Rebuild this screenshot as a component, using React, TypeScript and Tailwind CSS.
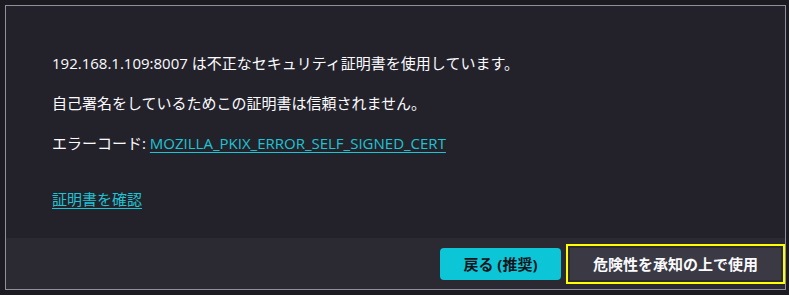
import React from "react";

export default function App() {
  const font = { fontFamily: '"Open Sans", "Noto Sans CJK JP", sans-serif' };
  return (
    <div className="w-[789px] h-[295px] bg-[#1c1b22] pt-[5px] pl-[5px]" style={font}>
      <div className="w-[781px] h-[285px] border border-[#8f8f9d] bg-[#23222b] flex flex-col">
        <div className="flex-1 pl-[46px] pt-[47px] text-[15px] leading-[20px] text-[#fbfbfe]">
          <p>192.168.1.109:8007 は不正なセキュリティ証明書を使用しています。</p>
          <p className="mt-[20px]">自己署名をしているためこの証明書は信頼されません。</p>
          <p className="mt-[20px]">
            エラーコード:{" "}
            <a className="text-[#1fc4d4] underline underline-offset-[3px]" href="#">
              MOZILLA_PKIX_ERROR_SELF_SIGNED_CERT
            </a>
          </p>
          <p className="mt-[36px]">
            <a className="text-[#1fc4d4] underline underline-offset-[3px]" href="#">
              証明書を確認
            </a>
          </p>
        </div>
        <div className="h-[51px] bg-[#2b2a33] flex justify-end items-start pt-[10px] gap-[5px]">
          <button className="h-[32px] w-[121px] rounded-[4px] bg-[#0cc6d8] text-[#15141a] font-bold text-[15px] leading-none">
            戻る (推奨)
          </button>
          <div className="border-2 border-[#ffff00] p-[2px] -mt-[4px]">
            <button className="block h-[32px] w-[211px] bg-[#3a3944] text-[#fbfbfe] font-bold text-[15px] leading-none">
              危険性を承知の上で使用
            </button>
          </div>
        </div>
      </div>
    </div>
  );
}
